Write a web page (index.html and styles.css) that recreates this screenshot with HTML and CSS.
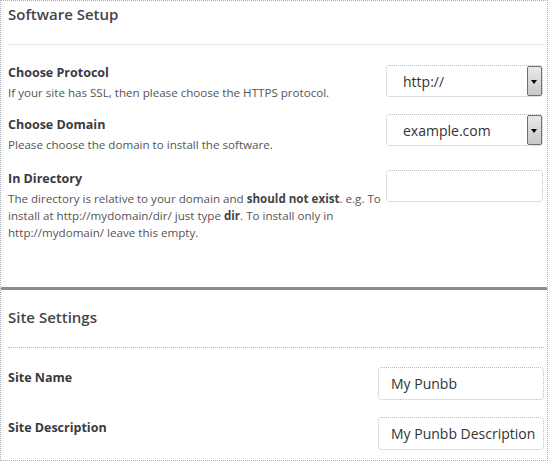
FILE: index.html
```html
<!DOCTYPE html>
<html>
<head>
<meta charset="utf-8">
<link rel="stylesheet" href="styles.css">
</head>
<body>
<div class="frame">
  <section class="sec sec-setup">
    <h2 class="title">Software Setup</h2>
    <div class="rule rule-green"></div>
    <div class="row row-protocol">
      <div class="info">
        <div class="label">Choose Protocol</div>
        <div class="desc">If your site has SSL, then please choose the HTTPS protocol.</div>
      </div>
      <div class="select"><span class="val">http://</span><span class="arrow"></span></div>
    </div>
    <div class="row row-domain">
      <div class="info">
        <div class="label">Choose Domain</div>
        <div class="desc">Please choose the domain to install the software.</div>
      </div>
      <div class="select select-up"><span class="val">example.com</span><span class="arrow"></span></div>
    </div>
    <div class="row row-dir">
      <div class="info">
        <div class="label">In Directory</div>
        <div class="desc">The directory is relative to your domain and <b>should not exist</b>. e.g. To install at http://mydomain/dir/ just type <b>dir</b>. To install only in http://mydomain/ leave this empty.</div>
      </div>
      <div class="input input1"></div>
    </div>
  </section>
  <div class="sep"></div>
  <section class="sec sec-site">
    <h2 class="title">Site Settings</h2>
    <div class="rule rule-dots"></div>
    <div class="row2 row-name">
      <div class="label">Site Name</div>
      <div class="input input2">My Punbb</div>
    </div>
    <div class="row2 row-descr">
      <div class="label">Site Description</div>
      <div class="input input2">My Punbb Description</div>
    </div>
  </section>
</div>
</body>
</html>
```
FILE: styles.css
```css
html, body { margin: 0; padding: 0; background: #fff; }
body { font-family: "Open Sans", "Noto Sans", sans-serif; color: #444; }
.frame {
  width: 546px;
  height: 459px;
  border: 1px dotted #a9aeb4;
  overflow: hidden;
  background: #fff;
}
.sec { padding: 0 3px 0 7px; }
.sec-setup { height: 286px; }
.title {
  margin: 0;
  padding-top: 1px;
  font-size: 15px;
  line-height: 24px;
  font-weight: 600;
  color: #44444c;
}
.rule { height: 1px; }
.rule-green { background: #dfe9df; margin-top: 18px; }
.row { display: flex; justify-content: space-between; align-items: flex-start; }
.row-protocol { margin-top: 19px; }
.row-domain { margin-top: 15px; }
.row-dir { margin-top: 17px; }
.info { width: 382px; }
.label {
  font-size: 12.5px;
  font-weight: 700;
  color: #3a3a42;
  line-height: 18px;
}
.desc {
  font-size: 11.6px;
  line-height: 17px;
  color: #555;
  margin-top: 2px;
}
.desc b { color: #444; }
.select, .input {
  width: 155px;
  height: 30px;
  border: 1px dotted #b9bcc0;
  border-radius: 4px;
  box-sizing: content-box;
  position: relative;
  display: flex;
  align-items: center;
  font-size: 14px;
  color: #333;
  flex: none;
}
.select { margin-top: 1px; margin-right: 1px; }
.select-up { margin-top: -2px; }
.input1 { margin-right: 1px; margin-top: 0; }
.val { padding-left: 16px; }
.arrow {
  position: absolute;
  right: 0;
  top: 0;
  bottom: 0;
  width: 15px;
  border: 1px solid #707070;
  border-radius: 2px;
  background: linear-gradient(#e8e8e8, #c8c8c8);
  box-sizing: border-box;
}
.arrow::after {
  content: "";
  position: absolute;
  left: 3px;
  top: 13px;
  border-left: 3.5px solid transparent;
  border-right: 3.5px solid transparent;
  border-top: 4px solid #000;
}
.sep { height: 3px; background: #8c8c8c; }
.sec-site .title { margin-top: 14px; }
.rule-dots { border-top: 1px dotted #b8b8b8; height: 0; margin-top: 18px; }
.row2 { display: flex; justify-content: space-between; align-items: flex-start; }
.row2 .label { padding-top: 2px; }
.row-name { margin-top: 19px; }
.row-descr { margin-top: 17px; }
.input2 { width: 166px; padding-left: 12px; box-sizing: border-box; height: 33px; }
```
